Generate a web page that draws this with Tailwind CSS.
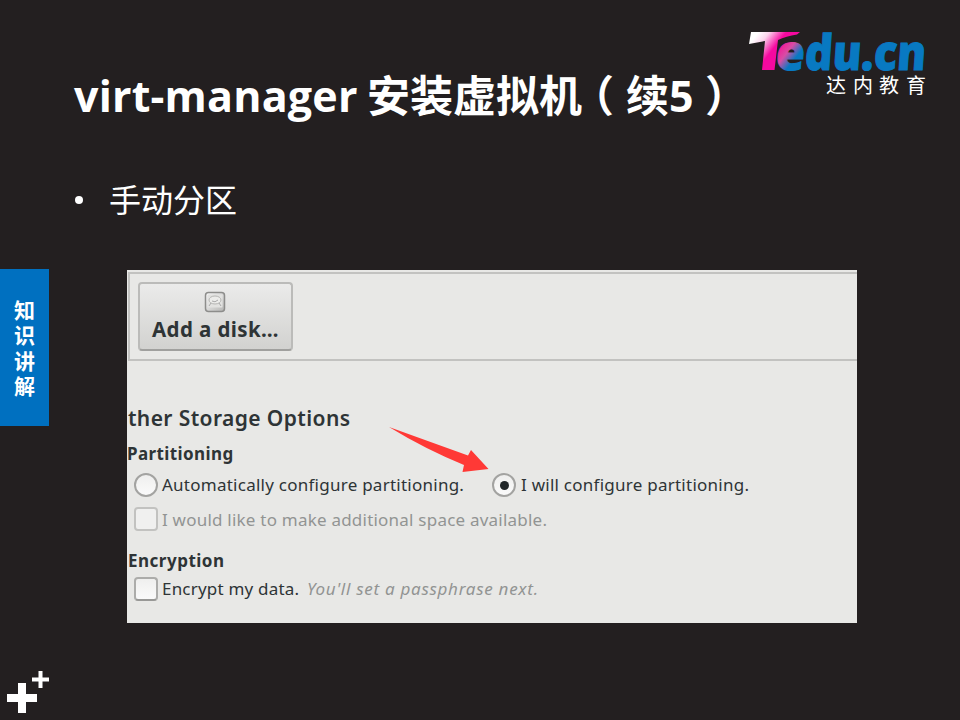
<!DOCTYPE html>
<html lang="zh-CN">
<head>
<meta charset="utf-8">
<title>virt-manager 安装虚拟机</title>
<script src="https://cdn.jsdelivr.net/npm/@tailwindcss/browser@4"></script>
</head>
<body class="overflow-hidden bg-[#231f20]">
<main class="flex h-[720px] w-[960px] flex-col overflow-hidden bg-[#231f20] font-['Open_Sans','Noto_Sans_CJK_SC',sans-serif] text-white">
  <header class="flex h-[170px] items-start pl-[74px]">
    <h1 class="flex w-[666px] shrink-0 pt-[67px] text-[43px] leading-[58px] font-bold whitespace-nowrap">
      <span class="w-[293px] shrink-0 tracking-[0.2px]">virt-manager</span>
      <span class="w-[216px] shrink-0">安装虚拟机</span>
      <span class="-ml-[12px] w-[55px] shrink-0">（</span>
      <span class="w-[43px] shrink-0">续</span>
      <span class="w-[36px] shrink-0">5</span>
      <span class="shrink-0">）</span>
    </h1>
    <svg class="h-[110px] w-[220px] shrink-0" viewBox="740 0 220 110" role="img" aria-label="Tedu.cn 达内教育">
      <defs>
        <linearGradient id="t" gradientUnits="userSpaceOnUse" x1="757" y1="34" x2="780" y2="52">
          <stop offset="0" stop-color="#fff"/><stop offset=".3" stop-color="#fbd3ec"/><stop offset=".75" stop-color="#f609a0"/><stop offset="1" stop-color="#f609a0"/>
        </linearGradient>
        <linearGradient id="e" gradientUnits="userSpaceOnUse" x1="2" y1="-20" x2="23" y2="-5">
          <stop offset="0" stop-color="#f21d98"/><stop offset=".35" stop-color="#d84da5"/><stop offset=".75" stop-color="#0879c2"/>
        </linearGradient>
      </defs>
      <path fill="url(#t)" d="M751 32H800L797 34.500Q786 36 778 40L774.500 70H762L765 41L749 44Z"/>
      <g font-family="Open Sans" font-weight="800" font-size="49" stroke-width="1">
        <text transform="translate(775 69.500) skewX(-4)" fill="url(#e)" stroke="url(#e)" textLength="29" lengthAdjust="spacingAndGlyphs">e</text>
        <text transform="translate(804 69.500) skewX(-4)" fill="#0879c2" stroke="#0879c2" textLength="121" lengthAdjust="spacingAndGlyphs">du.cn</text>
      </g>
      <text x="826 853 879 906" y="93" font-family="Noto Sans CJK SC" font-size="20" fill="#fff">达内教育</text>
    </svg>
  </header>
  <ul class="h-[99px] pl-[75px]">
    <li class="flex h-[60px] items-center text-[32px] leading-[60px]"><i class="mr-[26px] block size-[8px] rounded-full bg-white"></i><span>手动分区</span></li>
  </ul>
  <div class="flex items-start">
    <aside class="flex h-[157px] w-[49px] flex-col items-center justify-center bg-[#0070c0] pt-[2px] text-[21px] leading-[25.5px] font-bold">
      <span>知</span><span>识</span><span>讲</span><span>解</span>
    </aside>
    <section class="mt-px ml-[78px] h-[353px] w-[730px] overflow-hidden bg-[#e8e8e6] font-['Noto_Sans','Open_Sans',sans-serif] text-[#2e3436]">
      <div class="mt-[2px] ml-[1px] flex h-[89px] border-y-2 border-l-2 border-[#c2c2c0] pt-[8px] pl-[8px]">
        <button class="flex h-[69px] w-[155px] flex-col items-center rounded-[4px] border-2 border-[#bbbbb9] border-b-[#a0a09e] bg-linear-to-b from-[#ebebea] to-[#d2d2d0] pt-[7px]">
          <svg class="mr-[2px] h-[22px] w-[22px] shrink-0" viewBox="0 0 22 22"><defs><linearGradient id="d" x1="0" y1="0" x2="1" y2="1"><stop stop-color="#fafafa"/><stop offset="1" stop-color="#b5b5b3"/></linearGradient></defs><rect x="1.500" y="1.500" width="19" height="19" rx="3" fill="url(#d)" stroke="#8d8d8b" stroke-width="1.500"/><rect x="3.500" y="3.500" width="15" height="13" rx="1" fill="#e2e2e0"/><ellipse cx="11" cy="9" rx="6" ry="4" fill="#ececea" stroke="#b5b5b3"/><path d="M5 15l2-3M17 15l-2-3M8 10q3 2 6-1" stroke="#aaa" fill="none"/></svg>
          <span class="mt-px text-[20.5px] leading-[30px] font-bold tracking-[0.4px] whitespace-nowrap">Add a disk…</span>
        </button>
      </div>
      <h2 class="mt-[42px] -ml-[16px] text-[21px] leading-[30px] font-semibold tracking-[0.4px] whitespace-nowrap">Other Storage Options</h2>
      <h3 class="mt-[9px] text-[17px] leading-[24px] font-bold tracking-[0.4px] whitespace-nowrap">Partitioning</h3>
      <div class="mt-[4px] flex h-[30px] items-center text-[17px] tracking-[0.25px] whitespace-nowrap">
        <i class="ml-[7px] block size-[24px] rounded-full border-2 border-[#a3a3a1] bg-linear-to-b from-[#efefee] to-[#fafafa]"></i>
        <span class="ml-[4px] w-[330px]">Automatically configure partitioning.</span>
        <i class="flex size-[24px] items-center justify-center rounded-full border-2 border-[#a3a3a1] bg-linear-to-b from-[#efefee] to-[#fafafa]"><b class="size-[9px] rounded-full bg-[#202628]"></b></i>
        <span class="ml-[5px]">I will configure partitioning.</span>
      </div>
      <div class="mt-[4px] flex h-[30px] items-center text-[17px] tracking-[0.22px] whitespace-nowrap text-[#929493]">
        <i class="ml-[7px] block size-[24px] rounded-[4px] border-2 border-[#c2c2c0] bg-[#f0f0ef]"></i>
        <span class="mt-[2px] ml-[4px]">I would like to make additional space available.</span>
      </div>
      <h3 class="mt-[15px] ml-[1px] text-[17px] leading-[24px] font-bold tracking-[0.5px] whitespace-nowrap">Encryption</h3>
      <div class="mt-[1px] flex h-[30px] items-center text-[17px] tracking-[0.2px] whitespace-nowrap">
        <i class="ml-[7px] block size-[24px] rounded-[4px] border-2 border-[#acacaa] border-b-[#989896] bg-linear-to-b from-[#efefee] to-[#fafafa]"></i>
        <span class="ml-[4px] w-[145px]">Encrypt my data.</span>
        <em class="tracking-[0.72px] text-[#929493]">You'll set a passphrase next.</em>
      </div>
    </section>
  </div>
  <footer class="mt-[37px] h-[60px]">
    <svg class="h-[60px] w-[60px]" viewBox="0 0 60 60" fill="#fff"><path d="M18 23h8v11h11v8h-11v11h-8v-11h-11v-8h11zM38.500 11h4v6.500h6.500v4h-6.500v6.500h-4v-6.500h-6.500v-4h6.500z"/></svg>
  </footer>
  <svg class="absolute top-[420px] left-[379px] h-[60px] w-[120px]" viewBox="379 420 120 60"><path fill="#ff3936" d="M389 427L468 455.500L471 450L488.500 469L462.500 472L464 465Q425 449 389 427Z"/></svg>
</main>
</body>
</html>
